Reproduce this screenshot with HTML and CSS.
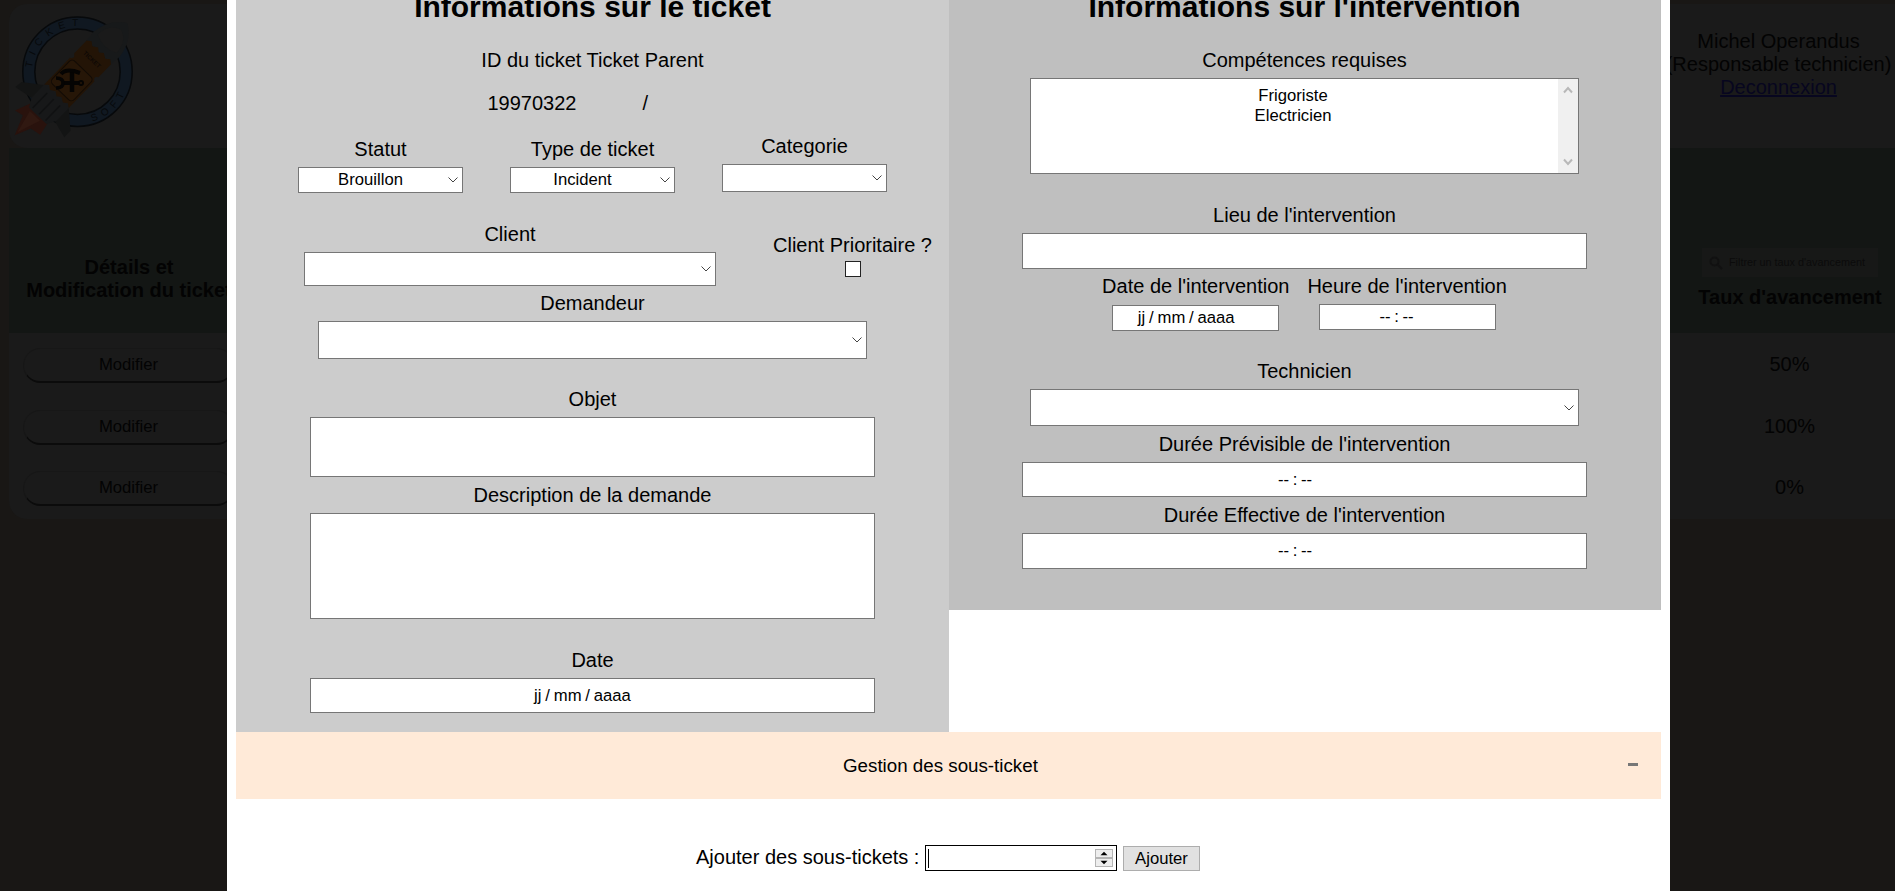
FILE: index.html
```
<!DOCTYPE html>
<html lang="fr">
<head>
<meta charset="utf-8">
<title>Gestion des tickets</title>
<link rel="stylesheet" href="styles.css">
</head>
<body>
<div class="page">
  <header class="header">
    <svg class="logo" viewBox="0 0 135 140" width="135" height="140">
      <defs>
        <path id="arc-top" d="M32.300 68A45.500 45.500 0 0 1 92 28.500"/>
        <path id="arc-bottom" d="M92.500 121.500A52 52 0 0 0 129.500 72"/>
      </defs>
      <circle cx="77.500" cy="71.700" r="48.700" fill="none" stroke="#07090b" stroke-width="13.500"/>
      <circle cx="77.500" cy="71.700" r="48.700" fill="none" stroke="#101821" stroke-width="10.500"/>
      <text class="logo-text"><textPath href="#arc-top">TICKET</textPath></text>
      <text class="logo-text logo-text-bottom"><textPath href="#arc-bottom">SOFT</textPath></text>
      <g transform="translate(78 74) rotate(44)">
        <path d="M-14 55L-20 70L-11 68L-3 88L4 72L15 70L12 55Z" fill="#29120d"/>
        <path d="M-9 60L-3 84L5 60Z" fill="#301811"/>
        <path d="M-16 31L-35 45L-36 53L-14 49L12 49L34 55L34 46L17 31Z" fill="#131414"/>
        <path d="M-17 29H17V49L12 58H-12L-17 49Z" fill="#171819"/>
        <path d="M-9 35V56M0 35V56M9 35V56" stroke="#101112" stroke-width="1.500"/>
        <path d="M-17 -29H17L18 -42Q15 -62 0 -71Q-15 -62 -18 -42Z" fill="#17191a"/>
        <path d="M-13 -42Q-13 -57 0 -62Q13 -57 13 -42Q0 -35 -13 -42Z" fill="#1a1a1a"/>
        <path d="M-17 -30L-13 -33L-9 -30L-4 -33L0 -30L4 -33L9 -30L13 -33L17 -30V-12Q12 -9 17 -6V31L13 28L9 31L4 28L0 31L-4 28L-9 31L-13 28L-17 31V-6Q-12 -9 -17 -12Z" fill="#231406"/>
        <rect x="-15" y="-7" width="30" height="32" rx="4" fill="#261607" stroke="#120b05"/>
        <text class="logo-ticket" x="0" y="-18">TICKET</text>
      </g>
      <g fill="none" stroke="#050403">
        <path d="M72 72V92" stroke-width="4.500"/>
        <path d="M61 74Q65 69 74 71L80 73" stroke-width="4"/>
        <path d="M62 83L80 83" stroke-width="4"/>
        <path d="M56 78Q63 78 63 83Q63 88 56 88" stroke-width="3.500"/>
        <circle cx="81" cy="83" r="2" stroke-width="2"/>
      </g>
    </svg>
    <div class="account">
      <span>Michel Operandus</span>
      <span>(Responsable technicien)</span>
      <a href="#">Deconnexion</a>
    </div>
  </header>
  <div class="table">
    <div class="thead">
      <div class="th th-action">Détails et<br>Modification du ticket</div>
      <div class="th th-rate">
        <div class="search">
          <svg width="14" height="14" viewBox="0 0 14 14" fill="none" stroke="#111" stroke-width="2"><circle cx="5.500" cy="5.500" r="4"/><path d="M8.500 8.500L13 13"/></svg>
          <span>Filtrer un taux d'avancement</span>
        </div>
        Taux d'avancement
      </div>
    </div>
    <div class="row"><button class="edit">Modifier</button><span class="rate">50%</span></div>
    <div class="row"><button class="edit">Modifier</button><span class="rate">100%</span></div>
    <div class="row"><button class="edit">Modifier</button><span class="rate">0%</span></div>
  </div>
</div>

<main class="modal">
  <div class="panels">
    <section class="panel panel-ticket">
      <h2>Informations sur le ticket</h2>
      <div class="label">ID du ticket Ticket Parent</div>
      <div class="ids"><span class="id-value">19970322</span><span class="parent-value">/</span></div>
      <div class="trio">
        <div class="col"><div class="label">Statut</div><div class="box select small">Brouillon<svg class="chev" viewBox="0 0 10 6"><path d="M.5 .5L5 5L9.500 .5"/></svg></div></div>
        <div class="col"><div class="label">Type de ticket</div><div class="box select small">Incident<svg class="chev" viewBox="0 0 10 6"><path d="M.5 .5L5 5L9.500 .5"/></svg></div></div>
        <div class="col col-category"><div class="label">Categorie</div><div class="box select category"><svg class="chev" viewBox="0 0 10 6"><path d="M.5 .5L5 5L9.500 .5"/></svg></div></div>
      </div>
      <div class="client-row">
        <div class="client"><div class="label">Client</div><div class="box select client-select"><svg class="chev" viewBox="0 0 10 6"><path d="M.5 .5L5 5L9.500 .5"/></svg></div></div>
        <div class="priority"><div class="label">Client Prioritaire ?</div><div class="checkbox"></div></div>
      </div>
      <div class="label">Demandeur</div>
      <div class="box select narrow requester"><svg class="chev" viewBox="0 0 10 6"><path d="M.5 .5L5 5L9.500 .5"/></svg></div>
      <div class="label">Objet</div>
      <div class="box wide subject"></div>
      <div class="label">Description de la demande</div>
      <div class="box wide description"></div>
      <div class="label">Date</div>
      <div class="box wide date">jj / mm / aaaa</div>
    </section>
    <section class="panel panel-job">
      <h2>Informations sur l'intervention</h2>
      <div class="label">Compétences requises</div>
      <div class="box narrow skills">
        <div class="options"><span>Frigoriste</span><span>Electricien</span></div>
        <div class="scrollbar">
          <svg viewBox="0 0 10 8"><path d="M1 6.500L5 2L9 6.500"/></svg>
          <svg viewBox="0 0 10 8"><path d="M1 1.500L5 6L9 1.500"/></svg>
        </div>
      </div>
      <div class="label">Lieu de l'intervention</div>
      <div class="box wide place"></div>
      <div class="when">
        <div class="col"><div class="label">Date de l'intervention</div><div class="box job-date">jj / mm / aaaa</div></div>
        <div class="col"><div class="label">Heure de l'intervention</div><div class="box job-time"><span class="time">-- : --</span></div></div>
      </div>
      <div class="label">Technicien</div>
      <div class="box select narrow technician"><svg class="chev" viewBox="0 0 10 6"><path d="M.5 .5L5 5L9.500 .5"/></svg></div>
      <div class="label">Durée Prévisible de l'intervention</div>
      <div class="box wide planned"><span class="time">-- : --</span></div>
      <div class="label">Durée Effective de l'intervention</div>
      <div class="box wide actual"><span class="time">-- : --</span></div>
    </section>
  </div>
  <div class="accordion"><span class="accordion-title">Gestion des sous-ticket</span><span class="minus"></span></div>
  <div class="add-row">
    <span class="add-label">Ajouter des sous-tickets :</span>
    <div class="number">
      <span class="caret"></span>
      <span class="spinner">
        <svg viewBox="0 0 18 8"><path d="M5 6L9 2L13 6Z"/></svg>
        <svg viewBox="0 0 18 8"><path d="M5 2L9 6L13 2Z"/></svg>
      </span>
    </div>
    <button class="add">Ajouter</button>
  </div>
</main>
</body>
</html>
```
FILE: styles.css
```
* { box-sizing: border-box; }
html, body { height: 100%; }
body {
  margin: 0;
  overflow: hidden;
  background: #191715;
  color: #000;
  font: 20px/23px "Liberation Sans", Arial, sans-serif;
}

/* Dimmed page behind the dialog */
.page { height: 100%; padding: 4px 0 0 9px; color: #030303; }
.header {
  display: flex;
  justify-content: space-between;
  height: 144px;
  background: #1a1a1a;
  border-radius: 18px 0 0 18px;
}
.logo { margin: -4px 0 0 -9px; }
.logo-text { font-size: 10px; letter-spacing: 6.500px; fill: #07090b; }
.logo-text-bottom { letter-spacing: 5.500px; }
.logo-ticket { font-size: 6px; font-weight: bold; text-anchor: middle; fill: #0d0805; }
.account {
  display: flex;
  flex-direction: column;
  align-items: center;
  width: 225px;
  margin-right: 4px;
  padding-top: 26px;
  white-space: nowrap;
}
.account a { color: #07061f; }
.table {
  height: 371px;
  background: #1a1a1a;
  border-radius: 0 0 0 18px;
}
.thead {
  display: flex;
  justify-content: space-between;
  height: 185px;
  margin-bottom: 14px;
  background: #131614;
  font-weight: bold;
  text-align: center;
}
.th-action { width: 240px; padding-top: 108px; white-space: nowrap; }
.th-rate { width: 210px; padding-top: 100px; }
.search {
  display: flex;
  align-items: center;
  gap: 6px;
  width: 176px;
  height: 29px;
  margin: 0 auto 9px;
  padding-left: 7px;
  background: #171817;
  color: #0b0b0b;
  font-size: 10.800px;
  font-weight: normal;
  white-space: nowrap;
}
.row {
  display: flex;
  justify-content: space-between;
  height: 61.500px;
  padding-left: 14px;
}
.edit {
  width: 211px;
  height: 35px;
  margin-top: 1px;
  padding: 0;
  border: 1px solid #171717;
  border-bottom: 2px solid #0b0b0b;
  border-radius: 18px;
  background: #1a1a1a;
  color: #030303;
  font: 16.670px "Liberation Sans", Arial, sans-serif;
}
.rate { width: 211px; padding-top: 6px; text-align: center; }

/* Ticket dialog */
.modal {
  position: absolute;
  top: 0;
  left: 227px;
  width: 1443px;
  height: 891px;
  overflow: hidden;
  padding: 0 9px;
  background: #fff;
}
.panels { display: flex; align-items: flex-start; height: 732px; }
.panel { display: flex; flex-direction: column; align-items: center; }
.panel-ticket { width: 713px; height: 732px; background: #ccc; }
.panel-job { width: 712px; height: 610px; padding-right: 1px; background: #bfbfbf; }
h2 { margin: -10px 0 25px; font-size: 30px; line-height: 34px; }
.label { margin-bottom: 6px; white-space: nowrap; }

.box {
  display: flex;
  align-items: center;
  justify-content: center;
  border: 1px solid #767676;
  background: #fff;
  font-size: 16.670px;
  line-height: 20px;
  white-space: nowrap;
}
.select { position: relative; }
.chev {
  position: absolute;
  top: calc(50% - 3px);
  right: 4px;
  width: 10px;
  height: 6px;
  fill: none;
  stroke: #444;
}
.wide { width: 565px; }
.narrow { width: 549px; }
.col { display: flex; flex-direction: column; align-items: center; }

.ids { display: flex; width: 224px; margin: 14px 0 20px; padding-left: 7px; }
.id-value { width: 155px; }
.trio { display: flex; gap: 47px; height: 58px; }
.trio .label { margin-top: 3px; }
.trio .col-category .label { margin-top: 0; }
.small { width: 165px; height: 26px; padding-right: 20px; }
.category { width: 165px; height: 28px; }

.client-row { display: flex; align-self: flex-start; gap: 57px; margin: 30px 0 6px 68px; }
.client { display: flex; flex-direction: column; align-items: center; }
.client-select { width: 412px; height: 34px; }
.priority { display: flex; flex-direction: column; align-items: center; padding-top: 11px; }
.priority .label { margin-bottom: 4px; }
.checkbox { width: 16px; height: 16px; margin-left: 2px; border: 1px solid #222; background: #fff; }
.requester { height: 38px; margin-bottom: 29px; }
.subject { height: 60px; margin-bottom: 7px; }
.description { height: 106px; margin-bottom: 30px; }
.date { height: 35px; padding-right: 20px; word-spacing: -0.800px; }

.skills { height: 96px; align-items: stretch; margin-bottom: 30px; }
.options {
  display: flex;
  flex: 1;
  flex-direction: column;
  align-items: center;
  padding: 7px 3px 0 0;
}
.scrollbar {
  display: flex;
  flex-direction: column;
  justify-content: space-between;
  width: 20px;
  padding: 7px 5px;
  background: #f0f0f0;
}
.scrollbar svg { width: 10px; height: 8px; fill: none; stroke: #b8b8b8; stroke-width: 2; }
.place { height: 36px; margin-bottom: 6px; }
.when { display: flex; gap: 18px; height: 56px; margin-bottom: 29px; }
.job-date { width: 167px; height: 26px; margin-top: 1px; padding-right: 19px; word-spacing: -0.800px; }
.job-time { width: 177px; height: 26px; padding-right: 21px; }
.technician { height: 37px; margin-bottom: 7px; }
.planned { height: 35px; margin-bottom: 7px; padding-right: 19px; }
.actual { height: 36px; padding-right: 19px; }
.time { word-spacing: -1px; }

.accordion {
  display: flex;
  align-items: center;
  height: 67px;
  padding: 0 23px 0 607px;
  background: #ffead8;
  font-size: 18.750px;
}
.accordion-title { padding-bottom: 1px; }
.minus { width: 10px; height: 3px; margin: -2px 0 0 auto; background: #777; }
.add-row { display: flex; align-items: center; margin-top: 46px; padding-left: 460px; }
.add-label { width: 229px; padding-bottom: 2px; white-space: nowrap; }
.number {
  display: flex;
  align-items: center;
  justify-content: space-between;
  width: 192px;
  height: 26px;
  margin-right: 6px;
  padding: 0 3px 0 2px;
  border: 1px solid #000;
}
.caret { width: 1px; height: 19px; background: #000; }
.spinner { display: flex; flex-direction: column; width: 18px; }
.spinner svg { height: 9px; border: 1px solid #b5b5b5; background: #eee; }
.add {
  width: 77px;
  height: 25px;
  padding: 1px 0 0;
  border: 1px solid #adadad;
  background: #e1e1e1;
  font: 16.670px "Liberation Sans", Arial, sans-serif;
}
```
